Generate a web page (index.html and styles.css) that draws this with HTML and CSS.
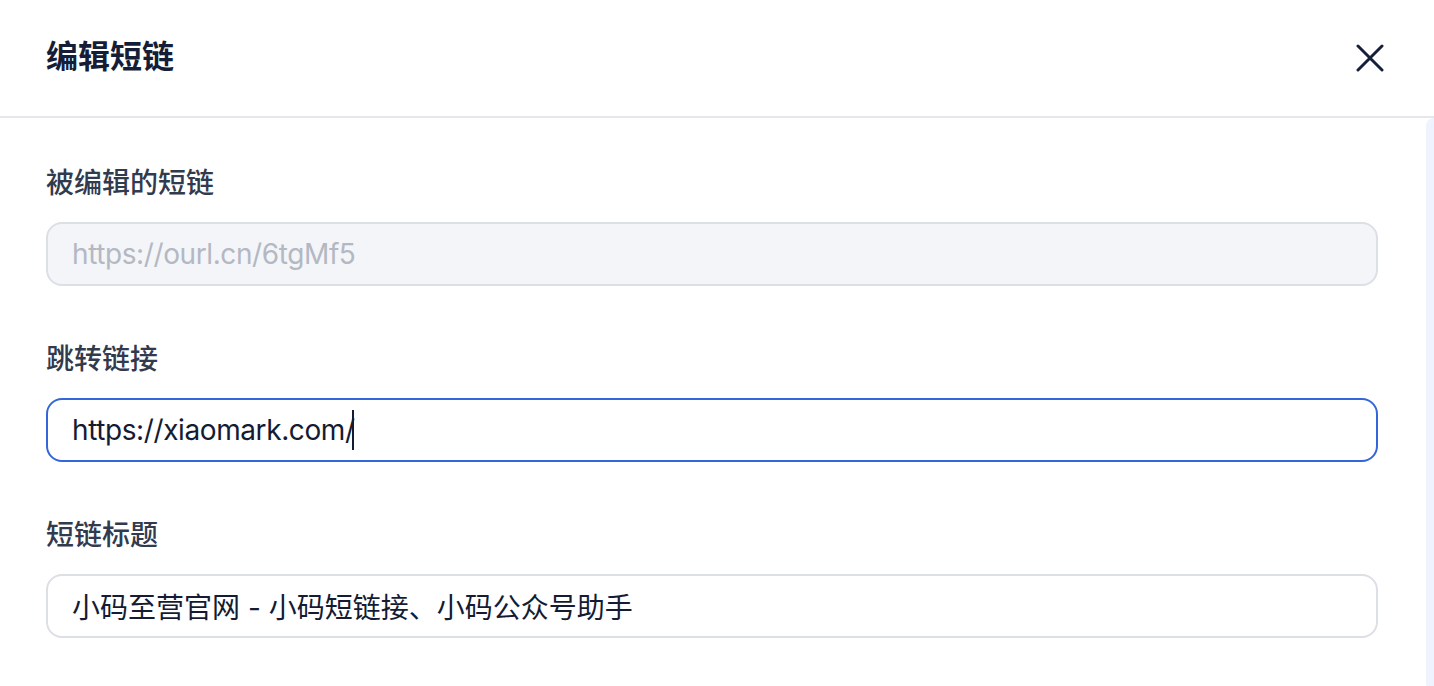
FILE: index.html
```html
<!DOCTYPE html>
<html lang="zh-CN">
<head>
<meta charset="utf-8">
<title>编辑短链</title>
<link rel="stylesheet" href="styles.css">
</head>
<body>
<div class="dialog">
  <header class="dialog-header">
    <h1 class="dialog-title">编辑短链</h1>
    <button class="close-btn" aria-label="关闭">
      <svg width="28" height="28" viewBox="0 0 28 28" fill="none">
        <path d="M2 2 L26 26 M26 2 L2 26" stroke="#16203d" stroke-width="3" stroke-linecap="round"/>
      </svg>
    </button>
  </header>
  <div class="dialog-body">
    <div class="form">
      <div class="field">
        <label class="field-label">被编辑的短链</label>
        <div class="input input-disabled input-url">https://ourl.cn/6tgMf5</div>
      </div>
      <div class="field">
        <label class="field-label">跳转链接</label>
        <div class="input input-focus input-url">https://xiaomark.com/<span class="caret"></span></div>
      </div>
      <div class="field">
        <label class="field-label">短链标题</label>
        <div class="input">小码至营官网 - 小码短链接、小码公众号助手</div>
      </div>
    </div>
    <div class="scroll-track"></div>
  </div>
</div>
</body>
</html>
```

FILE: styles.css
```css
* { box-sizing: border-box; }
html, body {
  margin: 0;
  padding: 0;
  background: #ffffff;
}
body {
  font-family: Inter, "Noto Sans CJK SC", "Noto Sans", sans-serif;
  width: 1434px;
  height: 686px;
  overflow: hidden;
}
.dialog {
  display: flex;
  flex-direction: column;
  height: 686px;
}
.dialog-header {
  height: 118px;
  flex: none;
  display: flex;
  align-items: center;
  justify-content: space-between;
  padding: 0 50px 0 46px;
  border-bottom: 2px solid #e5e7eb;
}
.dialog-title {
  margin: 0;
  font-size: 32px;
  font-weight: 700;
  color: #161d37;
  line-height: 44px;
  padding-bottom: 2px;
}
.close-btn {
  border: 0;
  background: none;
  padding: 0;
  width: 28px;
  height: 28px;
  display: flex;
  cursor: pointer;
}
.dialog-body {
  flex: 1;
  display: flex;
  padding-bottom: 3px;
}
.form {
  flex: 1;
  display: flex;
  flex-direction: column;
  padding: 45px 48px 0 46px;
}
.field {
  display: flex;
  flex-direction: column;
  margin-bottom: 53px;
}
.field-label {
  font-size: 28px;
  line-height: 40px;
  font-weight: 500;
  color: #323a4d;
  margin-bottom: 19px;
}
.input {
  height: 64px;
  border: 2px solid #dcdfe5;
  border-radius: 16px;
  padding: 0 24px;
  display: flex;
  align-items: center;
  font-size: 28px;
  color: #141b33;
  background: #ffffff;
}
.input-url {
  letter-spacing: -0.4px;
}
.input-disabled {
  background: #f4f5f8;
  color: #b3b8c3;
}
.input-focus {
  border-color: #3566d9;
}
.caret {
  display: inline-block;
  width: 2px;
  height: 40px;
  background: #141b33;
  margin-left: -3px;
}
.scroll-track {
  width: 8px;
  flex: none;
  background: #eef3fd;
  border-radius: 8px 0 0 8px;
}
```
